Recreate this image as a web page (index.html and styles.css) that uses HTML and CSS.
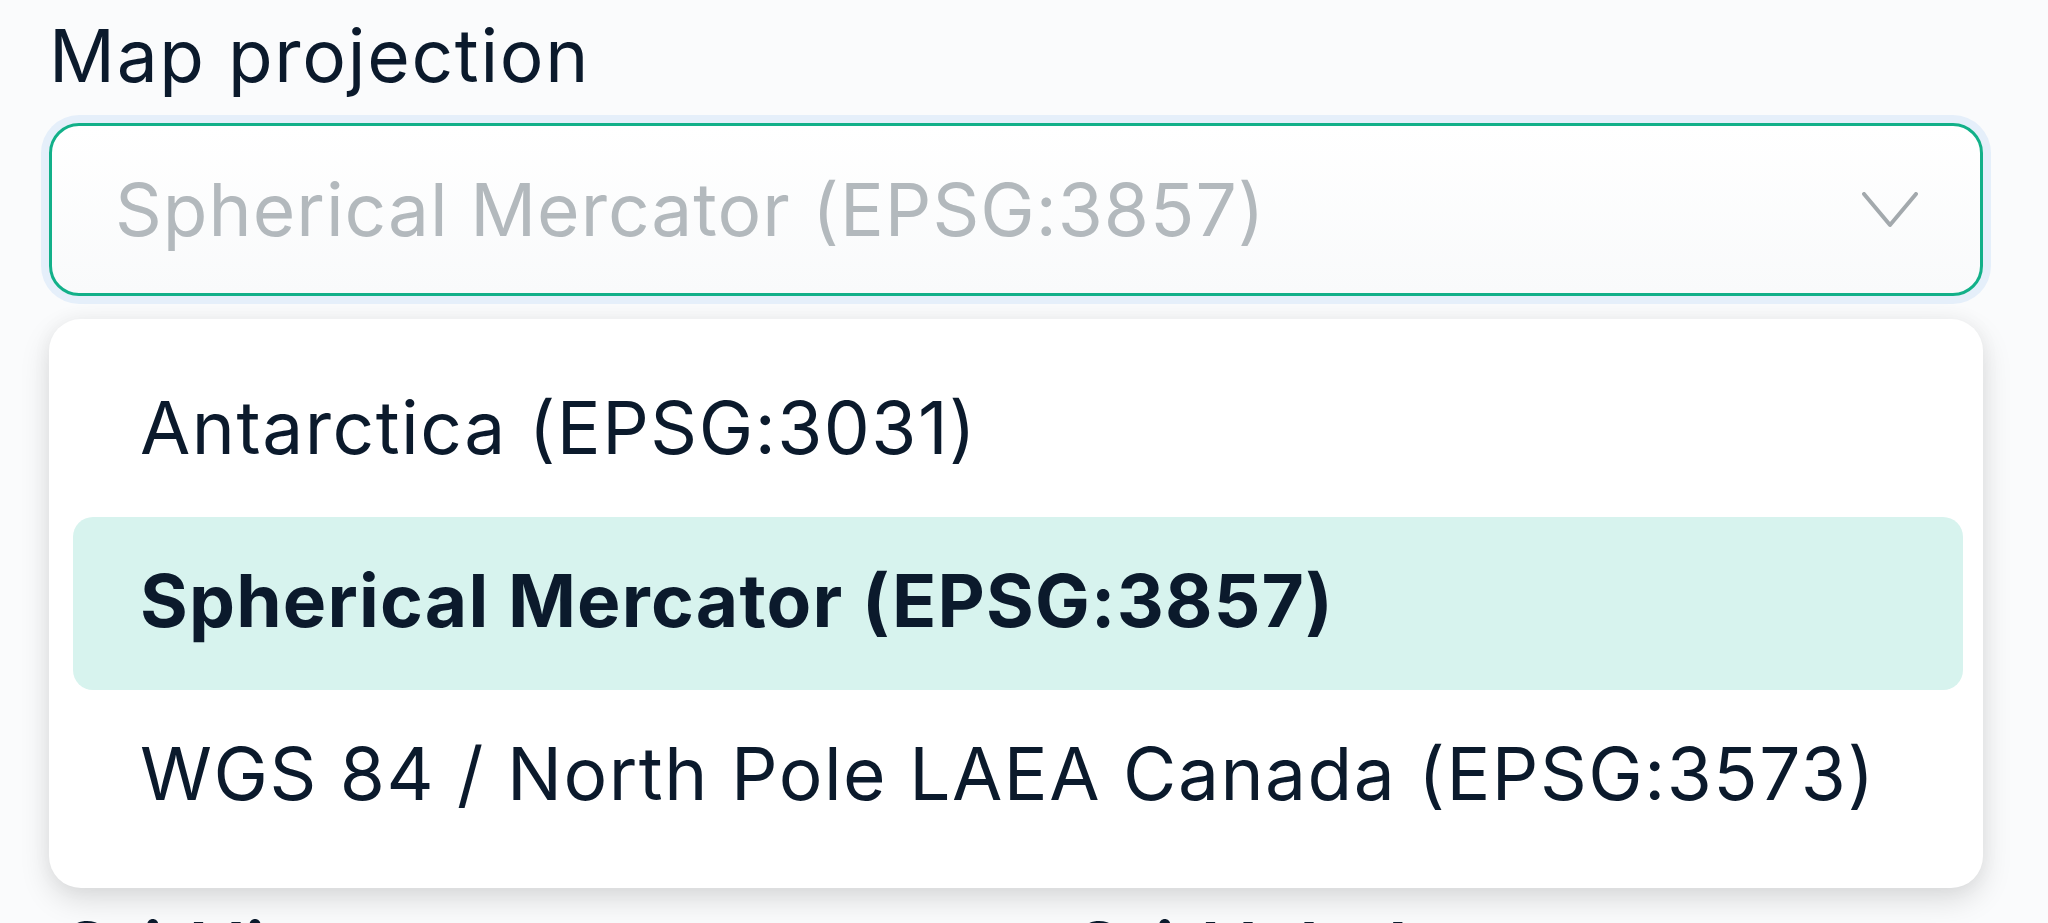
FILE: index.html
```html
<!DOCTYPE html>
<html lang="en">
<head>
<meta charset="utf-8">
<title>Map projection</title>
<link rel="stylesheet" href="styles.css">
</head>
<body>
<div class="page">
  <div class="field">
    <div class="label">Map projection</div>
    <div class="select">
      <span class="placeholder">Spherical Mercator (EPSG:3857)</span>
      <svg class="chevron" viewBox="0 0 56 36" width="56" height="36" aria-hidden="true">
        <path d="M2 2 L28 33 L54 2" fill="none" stroke="#a3a9ad" stroke-width="4" stroke-linecap="round" stroke-linejoin="round"/>
      </svg>
    </div>
    <div class="menu">
      <div class="option">Antarctica (EPSG:3031)</div>
      <div class="option selected">Spherical Mercator (EPSG:3857)</div>
      <div class="option">WGS 84 / North Pole LAEA Canada (EPSG:3573)</div>
    </div>
  </div>
  <div class="next-row">
    <div class="next-label">Grid lines</div>
    <div class="next-label">Grid labels</div>
  </div>
</div>
</body>
</html>
```

FILE: styles.css
```css
html, body {
  margin: 0;
  padding: 0;
}
body {
  background: #fafbfc;
  font-family: Inter, "Noto Sans", "Liberation Sans", sans-serif;
  color: #0b1a2c;
  overflow: hidden;
  height: 923px;
}
.page {
  padding: 12px 65px 0 49px;
}
.field {
  width: 1934px;
}
.label {
  font-size: 73px;
  letter-spacing: 1.7px;
  line-height: 88px;
  margin-bottom: 23px;
}
.select {
  box-sizing: border-box;
  height: 173px;
  border: 3px solid #12b089;
  border-radius: 30px;
  box-shadow: 0 0 0 8px #e5effa;
  background: linear-gradient(#ffffff, #f9fafb);
  display: flex;
  align-items: center;
  justify-content: space-between;
  padding: 0 62px 0 63px;
}
.placeholder {
  font-size: 73px;
  letter-spacing: 1px;
  color: #b3b9bd;
}
.chevron {
  display: block;
  flex: none;
}
.menu {
  margin-top: 23px;
  background: #ffffff;
  border-radius: 32px;
  padding: 25px 20px 25px 24px;
  box-shadow: 0 12px 30px rgba(0, 0, 0, 0.13), 0 0 20px rgba(0, 0, 0, 0.04);
}
.option {
  box-sizing: border-box;
  height: 173px;
  display: flex;
  align-items: center;
  padding: 0 0 6px 67px;
  font-size: 73px;
  letter-spacing: 1.5px;
  border-radius: 20px;
}
.option.selected {
  background: #d7f3ee;
  font-weight: 700;
  letter-spacing: 1.2px;
}
.next-row {
  display: flex;
  margin-top: 16px;
  padding-left: 10px;
}
.next-label {
  flex: none;
  font-size: 73px;
  font-weight: 600;
  width: 1012px;
}
```
